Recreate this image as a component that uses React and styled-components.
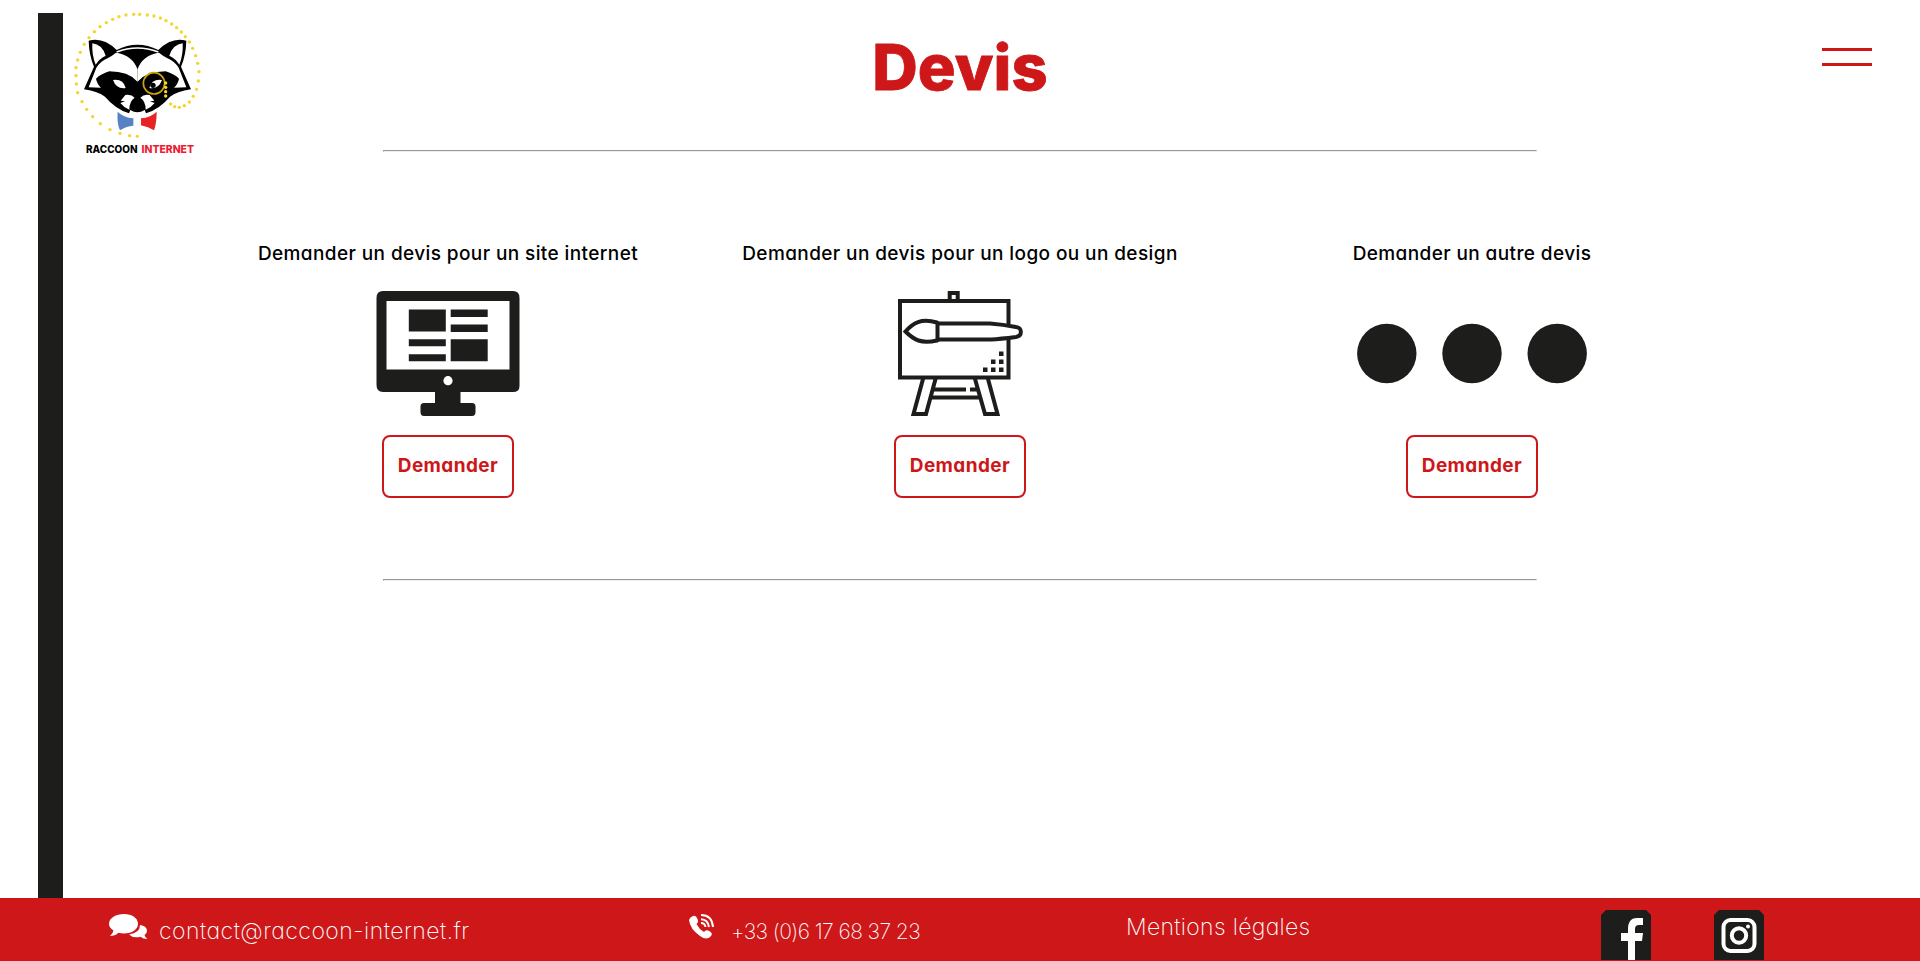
import React from "react";
import styled, { createGlobalStyle } from "styled-components";

const RED = "#cd1719";
const INK = "#1d1d1b";

const GlobalStyle = createGlobalStyle`
  body { margin: 0; background: #fff; overflow: hidden; font-family: Inter, "Open Sans", sans-serif; font-feature-settings: "cv11"; }
`;

const Page = styled.div`
  height: 961px;
  display: flex;
  flex-direction: column;
`;
const Body = styled.div`
  flex: 1;
  display: grid;
  grid-template-columns: 25px 1fr;
  padding: 13px 0 0 38px;
`;
const SideBar = styled.div`
  background: ${INK};
`;
const Content = styled.div`
  display: flex;
  flex-direction: column;
  padding-right: 63px;
`;
const Header = styled.header`
  display: grid;
  grid-template-columns: 320px 1fr 320px;
  height: 137px;
  margin-right: -63px;
  padding-right: 63px;
`;
const LogoSvg = styled.svg`
  width: 140px;
  height: 150px;
  margin: -3px 0 0 7px;
`;
const Title = styled.h1`
  margin: 0;
  padding-top: 15px;
  text-align: center;
  color: ${RED};
  font-size: 63px;
  line-height: 78px;
  font-weight: 800;
  letter-spacing: 0.1px;
  -webkit-text-stroke: 0.8px ${RED};
`;
const Burger = styled.div`
  justify-self: end;
  width: 50px;
  height: 12px;
  margin: 35px -15px 0 0;
  border: solid ${RED};
  border-width: 3px 0;
`;
const Rule = styled.hr`
  box-sizing: border-box;
  width: 1154px;
  height: 2px;
  margin: 0 auto;
  border: 1px solid;
  border-color: #9a9a9a #eeeeee #eeeeee #9a9a9a;
`;
const Cards = styled.main`
  display: grid;
  grid-template-columns: repeat(3, 512px);
  justify-content: center;
  padding: 90px 0 81px;
`;
const Card = styled.section`
  display: flex;
  flex-direction: column;
  align-items: center;
`;
const CardTitle = styled.h2`
  margin: 0 0 25px;
  font-size: 19px;
  line-height: 24px;
  font-weight: 500;
  color: #000;
  white-space: nowrap;
  letter-spacing: 0.4px;
`;
const Art = styled.svg`
  display: block;
  width: ${(p) => p.$w}px;
  height: 125px;
`;
const Button = styled.button`
  width: 132px;
  height: 63px;
  margin-top: 19px;
  padding: 0 0 3px;
  border: 2px solid ${RED};
  border-radius: 8px;
  background: #fff;
  color: ${RED};
  font: 700 19px Inter, "Open Sans", sans-serif;
  font-feature-settings: "cv11";
  letter-spacing: 0.4px;
`;
const Footer = styled.footer`
  height: 63px;
  display: grid;
  grid-template-columns: 688px 438px 475px 113px auto;
  background: ${RED};
  color: #fff;
  box-sizing: border-box;
`;
const FooterItem = styled.div`
  display: flex;
  align-items: flex-start;
  padding-left: ${(p) => p.$left || 0}px;
  gap: ${(p) => p.$gap || 0}px;
`;
const FooterIcon = styled.svg`
  margin-top: 16px;
  width: ${(p) => p.$w}px;
  height: 25px;
`;
const FooterText = styled.span`
  margin-top: ${(p) => p.$top}px;
  font-size: ${(p) => p.$size || 23}px;
  line-height: 28px;
  font-weight: 200;
  white-space: nowrap;
  letter-spacing: ${(p) => p.$tracking};
`;
const Social = styled.svg`
  width: 50px;
  height: 51px;
  margin-top: 12px;
`;

const ringDots = [
  [359, 43], [341, 43], [318, 45], [297, 50], [278, 58], [259, 68], [240, 80], [223, 95], [207, 113],
  [193, 133], [181, 157], [173, 180], [168, 203], [168, 227], [169, 252], [173, 278], [186, 305],
  [200, 328], [218, 350], [241, 371], [270, 389], [300, 400], [329, 407], [352, 409],
  [382, 45], [402, 48], [421, 54], [438, 62], [455, 72], [470, 83], [484, 96], [496, 110], [508, 126],
  [518, 145], [527, 167], [533, 190], [537, 215], [535, 243], [530, 268], [520, 289], [508, 306],
  [493, 317], [478, 322], [464, 320], [452, 312], [437, 288], [437, 275], [437, 262], [437, 249],
];

const HalfFace = () => (
  <g fill="#fff">
    <path d="M217 130Q246 133 257 167Q238 176 227 194Q215 165 217 130Z" />
    <path d="M264 174Q277 167 288 158Q338 166 352.500 208V245Q325 214 268 214Q242 222 228 236Q231 252 243 263L206 262L229 203Q242 183 264 174Z" />
    <path d="M279 240Q310 236 317 264Q289 268 279 240Z" />
    <path d="M302 302L316 285Q334 282 344 293Q328 303 328 329Q310 321 301 309L315 304Z" />
  </g>
);

const Logo = () => (
  <LogoSvg viewBox="0 0 140 150">
    <g transform="translate(-50 -10) scale(.33333)">
      <path
        fill="#000"
        d="M206 122Q250 110 290 150Q352 118 415 150Q455 110 499 122Q498 165 483 200L513 268Q470 275 450 290Q420 326 378 340L374 330Q352 343 331 330L327 340Q285 326 255 290Q235 275 192 268L222 200Q207 165 206 122Z"
      />
      <HalfFace />
      <g transform="translate(705 0) scale(-1 1)"><HalfFace /></g>
      <path fill="none" stroke="#fff" strokeWidth="5" d="M290 156Q352 132 415 156" />
      <circle cx="399" cy="256" r="8" fill="#000" />
      <circle cx="402" cy="250" r="32" fill="none" stroke="#c9a20c" strokeWidth="5" />
      <path fill="#5682c3" d="M293 335Q310 352 340 355V377Q320 378 300 391Q290 370 293 335Z" />
      <path fill="#e72323" d="M410 335Q393 352 363 355V376Q385 380 402 391Q410 370 410 335Z" />
      <g fill="#f5d52d">
        {ringDots.map(([x, y]) => <circle key={`${x}-${y}`} cx={x} cy={y} r="5" />)}
      </g>
    </g>
    <text x="16" y="143" fontFamily="Inter, sans-serif" fontSize="10.500" fontWeight="800" textLength="51.500" lengthAdjust="spacingAndGlyphs">RACCOON</text>
    <text x="71.500" y="143" fontFamily="Inter, sans-serif" fontSize="10.500" fontWeight="800" fill="#ed1c35" textLength="52.500" lengthAdjust="spacingAndGlyphs">INTERNET</text>
  </LogoSvg>
);

const ScreenArt = () => (
  <Art $w={144} viewBox="0 0 144 125" fill={INK}>
    <path fillRule="evenodd" d="M7 0H137Q143.500 0 143.500 7V95Q143.500 101 137 101H84.500V112H96Q99.500 112 99.500 115.500V121Q99.500 125 96 125H48Q44.500 125 44.500 121V115.500Q44.500 112 48 112H59V101H7Q.5 101 .5 94V7Q.5 0 7 0ZM10.500 10V78.500H133.500V10Z" />
    <circle cx="72" cy="89.700" r="4.600" fill="#fff" />
    <path d="M32.800 18.500h37v22h-37zM74.700 18.500h37v7.500h-37zM74.700 33.500h37v7.500h-37zM32.800 48.300h37v7h-37zM32.800 63.300h37v7h-37zM74.700 48.300h37v22h-37z" />
  </Art>
);

const EaselArt = () => (
  <Art $w={126} viewBox="0 0 126 125" fill="none" stroke={INK} strokeWidth="4">
    <path d="M52.700 9V2H60.700V9M3 10H111.500V86.500H3ZM26 88L16.500 123H29L38.500 88M78 88L88 123H100.500L91 88M36 98.500H69M73 98.500H81M34 106.500H83" />
    <path fill="#fff" d="M8.500 40.500C16 32 24 27 40 31.500L42 32.500H93Q106 33.500 119 36C125.500 36.500 125.500 45 119 46Q103 48 94 48.500H42L40 49.500C24 53 17 49 8.500 40.500Z" />
    <path d="M40.500 31V50" />
    <path fill={INK} stroke="none" d="M102 60.500h4.500v4.500h-4.500zM94 68.500h4.500v4.500h-4.500zM102 68.500h4.500v4.500h-4.500zM86 76.500h4.500v4.500h-4.500zM94 76.500h4.500v4.500h-4.500zM102 76.500h4.500v4.500h-4.500z" />
  </Art>
);

const DotsArt = () => (
  <Art $w={230} viewBox="0 0 230 125" fill={INK}>
    <circle cx="29.800" cy="62.500" r="29.700" />
    <circle cx="115" cy="62.500" r="29.700" />
    <circle cx="200.200" cy="62.500" r="29.700" />
  </Art>
);

const offers = [
  { title: "Demander un devis pour un site internet", art: <ScreenArt /> },
  { title: "Demander un devis pour un logo ou un design", art: <EaselArt /> },
  { title: "Demander un autre devis", art: <DotsArt /> },
];

export default function App() {
  return (
    <Page>
      <GlobalStyle />
      <Body>
        <SideBar />
        <Content>
          <Header>
            <Logo />
            <Title>Devis</Title>
            <Burger />
          </Header>
          <Rule />
          <Cards>
            {offers.map((o) => (
              <Card key={o.title}>
                <CardTitle>{o.title}</CardTitle>
                {o.art}
                <Button>Demander</Button>
              </Card>
            ))}
          </Cards>
          <Rule />
        </Content>
      </Body>
      <Footer>
        <FooterItem $left={109} $gap={11}>
          <FooterIcon $w={39} viewBox="0 0 39 25" fill="#fff">
            <path d="M15 0C23 0 29 4 29 9.800S23 19.500 15 19.500Q12 19.500 9.500 18.800Q6 22 1 22Q4 19.500 4.500 16.500Q0 14 0 9.800C0 4 7 0 15 0Z" />
            <path d="M31 11Q38 12 38 17Q38 19.500 35.500 21Q36 23.500 38.500 25Q34 25 31.500 22.800Q24 24.500 20 20.500Q31 19 31 11Z" />
          </FooterIcon>
          <FooterText $top={19} $tracking="0.48px">contact@raccoon-internet.fr</FooterText>
        </FooterItem>
        <FooterItem $left={1} $gap={16}>
          <FooterIcon $w={26} viewBox="0 0 26 25" fill="#fff">
            <path d="M4 2Q7 1 8.500 5Q10 8.500 7.500 10Q10 15 15 18Q17 15 21 17.500Q24 19.500 22 22Q18 27 11 22Q1 15 0 6Q1 3 4 2Z" />
            <path fill="none" stroke="#fff" strokeWidth="2" d="M12 1Q23 1 24 13M12 5.200Q19 5.500 20 13M12 9Q16 9 16.500 13" />
          </FooterIcon>
          <FooterText $top={20} $size={21} $tracking="-0.58px">+33 (0)6 17 68 37 23</FooterText>
        </FooterItem>
        <FooterItem>
          <FooterText $top={15} $tracking="0.32px">Mentions légales</FooterText>
        </FooterItem>
        <Social viewBox="0 0 50 51">
          <path fill={INK} d="M5 0H45L50 5V50H0V5Z" />
          <path fill="#fff" d="M27 50V31H20V23H27V19C27 11 31 8 36 8H42V15H38Q34 15 34 19V23H42L41 31H34V50Z" />
        </Social>
        <Social viewBox="0 0 50 51">
          <path fill={INK} d="M5 0H45L50 5V50H0V5Z" />
          <g fill="none" stroke="#fff" strokeWidth="4">
            <rect x="9.500" y="10" width="31" height="31" rx="7" />
            <circle cx="25" cy="25.500" r="7.200" />
          </g>
          <circle cx="34" cy="16.500" r="2" fill="#fff" />
        </Social>
      </Footer>
    </Page>
  );
}
